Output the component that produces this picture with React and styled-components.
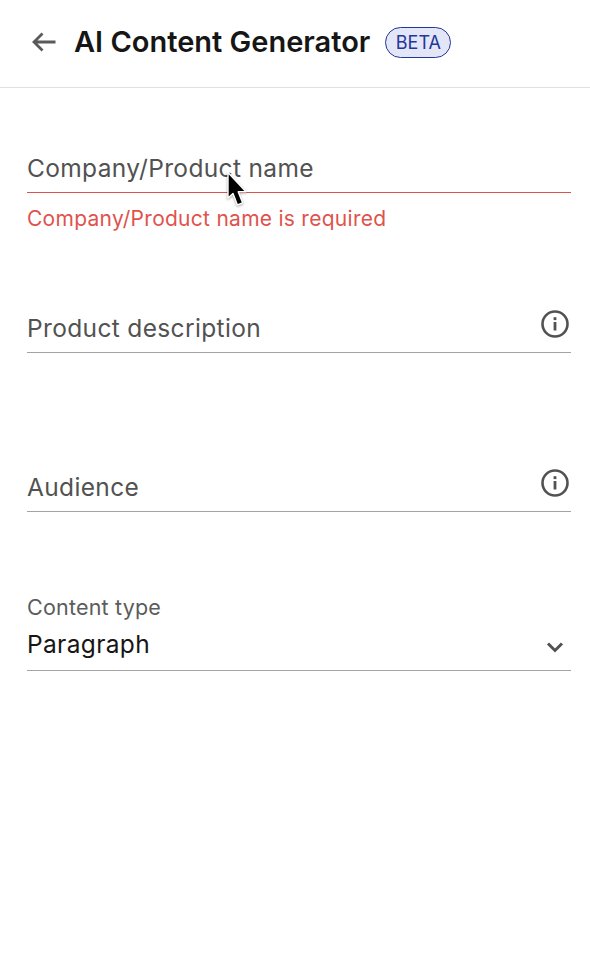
import React from "react";
import styled, { createGlobalStyle } from "styled-components";

const Global = createGlobalStyle`
  html, body {
    margin: 0;
    padding: 0;
    background: #fff;
    font-family: Inter, "Liberation Sans", sans-serif;
  }
`;

const Page = styled.div`
  position: relative;
  width: 590px;
  height: 972px;
  overflow: hidden;
  background: #fff;
`;

const Header = styled.header`
  display: flex;
  align-items: center;
  box-sizing: border-box;
  height: 88px;
  padding: 0 0 4px 30px;
  border-bottom: 1px solid #e0e0e0;
`;

const BackButton = styled.div`
  display: flex;
  width: 28px;
  height: 28px;
  margin: 1px 16px 0 0;
  color: #5a5a5a;
`;

const Title = styled.h1`
  margin: 0;
  font-size: 29px;
  line-height: 36px;
  font-weight: 600;
  color: #161616;
`;

const Badge = styled.span`
  box-sizing: border-box;
  display: flex;
  align-items: center;
  justify-content: center;
  width: 66px;
  height: 31px;
  margin: 2px 0 0 15px;
  border: 1px solid #23379a;
  border-radius: 16px;
  background: #e3e6f6;
  color: #23379a;
  font-size: 18px;
`;

const Form = styled.form`
  display: flex;
  flex-direction: column;
  padding: 0 19px 0 27px;
`;

const Field = styled.div`
  display: flex;
  align-items: flex-end;
  justify-content: space-between;
  box-sizing: border-box;
  height: ${(p) => p.$height}px;
  margin-top: ${(p) => p.$top}px;
  padding-bottom: 8px;
  border-bottom: 1px solid ${(p) => (p.$error ? "#d9534f" : "#a3a3a3")};
`;

const Placeholder = styled.span`
  font-size: 24.5px;
  line-height: 32px;
  letter-spacing: 0.35px;
  color: #525252;
`;

const ErrorText = styled.div`
  margin-top: 12px;
  height: 28px;
  font-size: 21px;
  line-height: 28px;
  letter-spacing: 0.27px;
  color: #df534d;
`;

const InfoButton = styled.div`
  display: flex;
  width: 30px;
  height: 30px;
  margin: 0 1px 5px 0;
  color: #525252;
`;

const SelectField = styled.div`
  display: flex;
  flex-direction: column;
  margin-top: 82px;
  border-bottom: 1px solid #a3a3a3;
`;

const SelectLabel = styled.label`
  font-size: 21.5px;
  line-height: 26px;
  letter-spacing: 0.2px;
  color: #5c5c5c;
`;

const SelectRow = styled.div`
  display: flex;
  align-items: center;
  justify-content: space-between;
  height: 50px;
  padding-bottom: 2px;
  box-sizing: border-box;
`;

const SelectValue = styled.span`
  font-size: 24.5px;
  line-height: 32px;
  letter-spacing: 0.35px;
  color: #161616;
`;

const Chevron = styled.div`
  display: flex;
  width: 24px;
  height: 24px;
  margin: 5px 4px 0 0;
  color: #525252;
`;

const Cursor = styled.svg`
  position: absolute;
  left: 223px;
  top: 171px;
  width: 26px;
  height: 38px;
  filter: drop-shadow(0 1px 1px rgba(0, 0, 0, 0.35));
`;

const InfoIcon = () => (
  <svg viewBox="0 0 30 30" width="30" height="30" fill="none">
    <circle cx="15" cy="15" r="12.5" stroke="currentColor" strokeWidth="2.6" />
    <rect x="13.6" y="13" width="2.8" height="8.5" fill="currentColor" />
    <rect x="13.6" y="8.2" width="2.8" height="2.9" fill="currentColor" />
  </svg>
);

export default function App() {
  return (
    <Page>
      <Global />
      <Header>
        <BackButton>
          <svg viewBox="0 0 28 28" width="28" height="28" fill="none" stroke="currentColor" strokeWidth="2.8">
            <path d="M25.5 14H4M12.5 5.5L4 14l8.5 8.5" />
          </svg>
        </BackButton>
        <Title>AI Content Generator</Title>
        <Badge>BETA</Badge>
      </Header>
      <Form>
        <Field $height={64} $top={41} $error>
          <Placeholder>Company/Product name</Placeholder>
        </Field>
        <ErrorText>Company/Product name is required</ErrorText>
        <Field $height={64} $top={56}>
          <Placeholder>Product description</Placeholder>
          <InfoButton>
            <InfoIcon />
          </InfoButton>
        </Field>
        <Field $height={64} $top={95}>
          <Placeholder>Audience</Placeholder>
          <InfoButton>
            <InfoIcon />
          </InfoButton>
        </Field>
        <SelectField>
          <SelectLabel>Content type</SelectLabel>
          <SelectRow>
            <SelectValue>Paragraph</SelectValue>
            <Chevron>
              <svg viewBox="0 0 24 24" width="24" height="24" fill="none" stroke="currentColor" strokeWidth="3">
                <path d="M5 8.5l7 7 7-7" />
              </svg>
            </Chevron>
          </SelectRow>
        </SelectField>
      </Form>
      <Cursor viewBox="0 0 26 38">
        <path d="M5 1.5v25.5l5-4.6L14.4 34l5.2-2.2-4.4-11H23z" fill="#000" stroke="#fff" strokeWidth="1.4" strokeLinejoin="round" />
      </Cursor>
    </Page>
  );
}
